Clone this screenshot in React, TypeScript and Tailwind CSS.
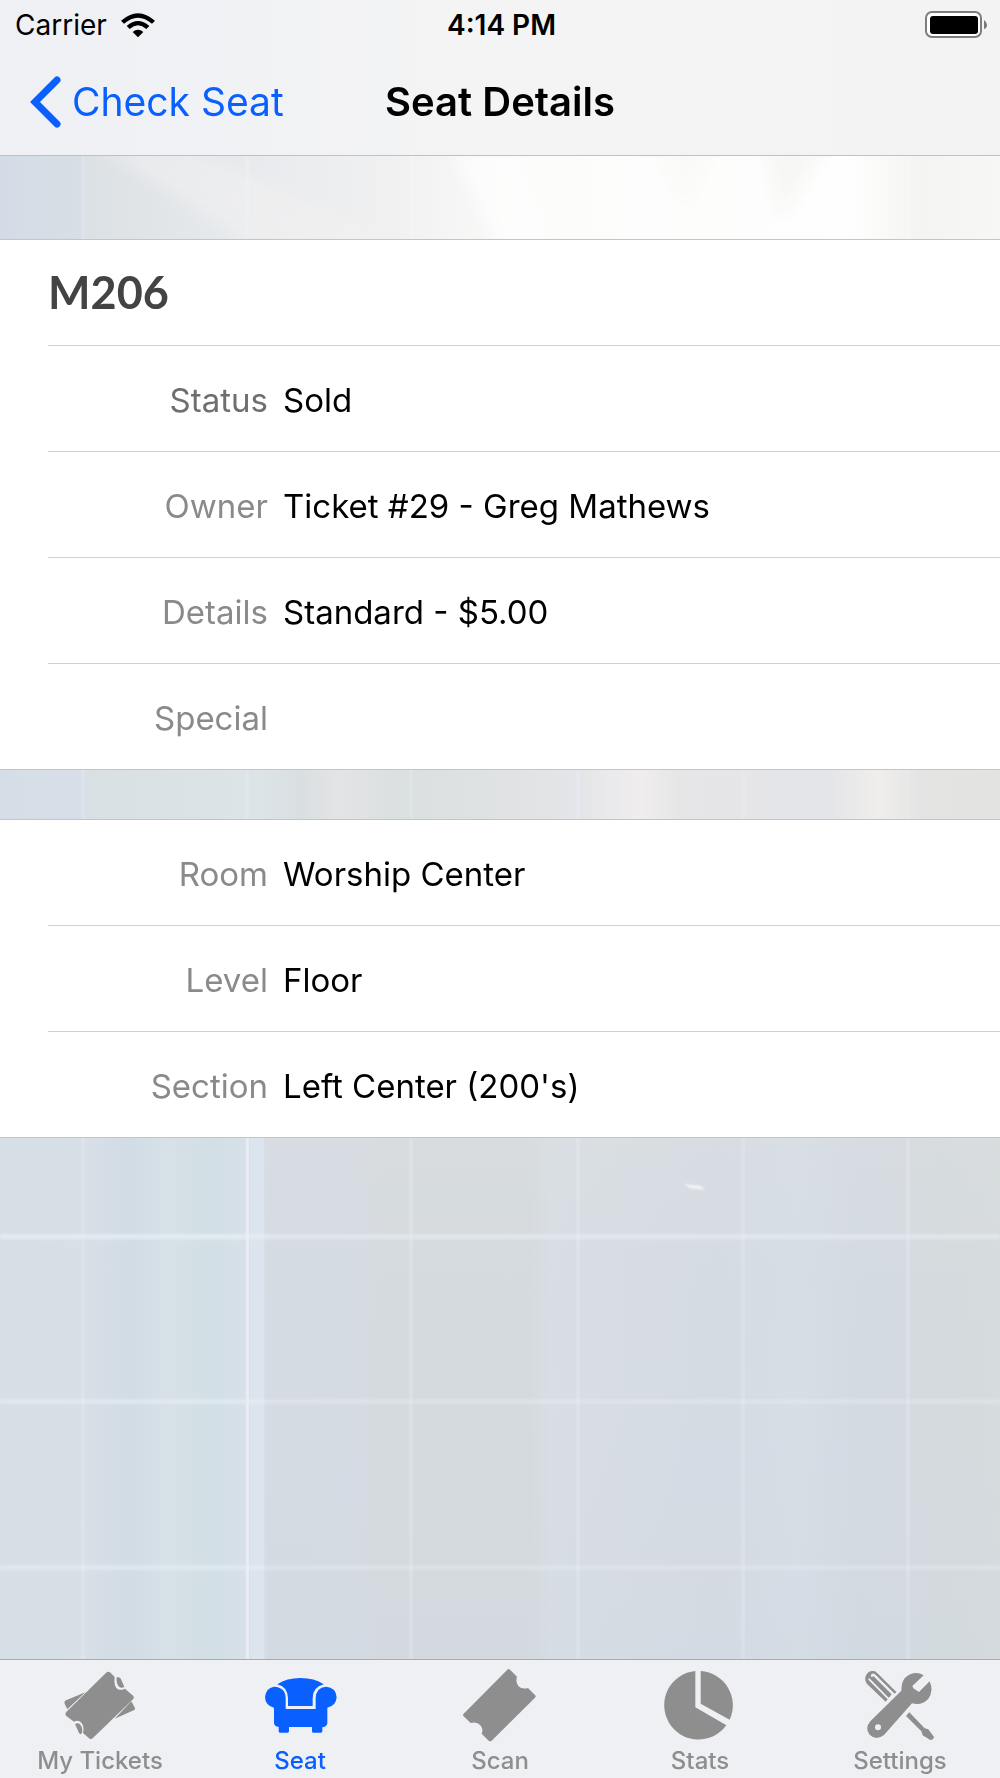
import type { ReactNode } from "react";
import clsx from "clsx";

type Row = { label: string; value: string; strong?: boolean };

const seatRows: Row[] = [
    { label: "Status", value: "Sold", strong: true },
    { label: "Owner", value: "Ticket #29 - Greg Mathews" },
    { label: "Details", value: "Standard - $5.00" },
    { label: "Special", value: "" },
];

const placeRows: Row[] = [
    { label: "Room", value: "Worship Center" },
    { label: "Level", value: "Floor" },
    { label: "Section", value: "Left Center (200's)" },
];

// Frosted glass wall behind the lists
function Wallpaper() {
    const columns = [83, 247, 411, 578, 743, 908];
    const lines = [1237, 1402, 1568];
    return (
        <svg
            className="absolute inset-0 -z-10 h-full w-full"
            viewBox="0 0 1000 1778"
            preserveAspectRatio="none"
            aria-hidden="true"
        >
            <defs>
                <linearGradient id="top" x1="0" x2="1" y1="0" y2="0">
                    <stop offset="0" stopColor="#d3dce6" />
                    <stop offset="0.08" stopColor="#d8dee5" />
                    <stop offset="0.09" stopColor="#dce1e5" />
                    <stop offset="0.24" stopColor="#e7eaed" />
                    <stop offset="0.4" stopColor="#f1f1f1" />
                    <stop offset="0.54" stopColor="#fcfcfb" />
                    <stop offset="0.85" stopColor="#fefefe" />
                    <stop offset="0.92" stopColor="#f4f4f2" />
                    <stop offset="1" stopColor="#f7f7f5" />
                </linearGradient>
                <linearGradient id="middle" x1="0" x2="1" y1="0" y2="0">
                    <stop offset="0" stopColor="#d5dee6" />
                    <stop offset="0.08" stopColor="#d8dee8" />
                    <stop offset="0.09" stopColor="#d9e0e4" />
                    <stop offset="0.26" stopColor="#dce4e8" />
                    <stop offset="0.3" stopColor="#d9dfe1" />
                    <stop offset="0.34" stopColor="#e3e4e5" />
                    <stop offset="0.4" stopColor="#dadfdf" />
                    <stop offset="0.58" stopColor="#e4e5e8" />
                    <stop offset="0.64" stopColor="#f0edee" />
                    <stop offset="0.68" stopColor="#e6e6e7" />
                    <stop offset="0.83" stopColor="#e4e5e9" />
                    <stop offset="0.88" stopColor="#f0eeeb" />
                    <stop offset="0.92" stopColor="#e3e4e3" />
                    <stop offset="1" stopColor="#e3e3e2" />
                </linearGradient>
                <linearGradient id="wall" x1="0" x2="1" y1="0" y2="0">
                    <stop offset="0" stopColor="#d5dfe5" />
                    <stop offset="0.08" stopColor="#d8dfe7" />
                    <stop offset="0.13" stopColor="#d2dce5" />
                    <stop offset="0.17" stopColor="#d7e1e7" />
                    <stop offset="0.21" stopColor="#d2dfe5" />
                    <stop offset="0.262" stopColor="#d8e1e9" />
                    <stop offset="0.268" stopColor="#d4dbe2" />
                    <stop offset="0.36" stopColor="#d5dbe3" />
                    <stop offset="0.38" stopColor="#d5dade" />
                    <stop offset="0.53" stopColor="#d5dade" />
                    <stop offset="0.55" stopColor="#d8dee4" />
                    <stop offset="0.72" stopColor="#d5dbe3" />
                    <stop offset="0.8" stopColor="#d6dee6" />
                    <stop offset="0.86" stopColor="#d3dae1" />
                    <stop offset="0.9" stopColor="#d5dae1" />
                    <stop offset="0.94" stopColor="#d4dadd" />
                    <stop offset="1" stopColor="#d6dbdd" />
                </linearGradient>
                <linearGradient id="shade" x1="0" x2="0" y1="0" y2="1">
                    <stop offset="0" stopColor="#e2e4e0" stopOpacity="0.5" />
                    <stop offset="0.5" stopColor="#d4dae2" stopOpacity="0" />
                    <stop offset="1" stopColor="#cbd5df" stopOpacity="0.4" />
                </linearGradient>
                <filter id="soft" x="-20%" y="-20%" width="140%" height="140%">
                    <feGaussianBlur stdDeviation="8" />
                </filter>
                <filter id="edge" x="-20%" y="-20%" width="140%" height="140%">
                    <feGaussianBlur stdDeviation="1" />
                </filter>
            </defs>
            <rect width="1000" height="500" fill="url(#top)" />
            <rect y="500" width="1000" height="500" fill="url(#middle)" />
            <rect y="1000" width="1000" height="778" fill="url(#wall)" />
            <rect x="266" y="1000" width="734" height="778" fill="url(#shade)" />
            <g filter="url(#soft)">
                <path d="M100 150 L190 150 L430 250 L260 250 Z" fill="#f4f1f2" opacity="0.5" />
                <path d="M450 150 L520 150 L550 250 L500 250 Z" fill="#fff" opacity="0.6" />
                <path d="M655 140 H715 L686 208 Z" fill="#f9f9f7" />
                <path d="M762 140 H830 L780 220 Z" fill="#f7f7f5" />
            </g>
            {columns.map((x) => (
                <g key={x}>
                    <rect x={x - 2} y="156" width="4" height="90" fill="#fff" opacity="0.15" />
                    <rect x={x - 2} y="760" width="4" height="1018" fill="#e9eff4" opacity="0.3" />
                </g>
            ))}
            <rect x="246" y="1130" width="3" height="648" fill="#ecf1f7" opacity="0.7" />
            <rect x="250" y="1130" width="14" height="648" fill="#e4ecf5" opacity="0.4" />
            <g filter="url(#edge)" fill="#e9f0f4">
                {lines.map((y) => (
                    <g key={y}>
                        <rect y={y - 3} width="1000" height="5" opacity="0.35" />
                        <rect y={y - 3} width="264" height="5" opacity="0.35" />
                    </g>
                ))}
                <rect y="1234" width="1000" height="6" opacity="0.3" />
                <path d="M683 1184 L700 1186 L706 1190 L690 1188 Z" fill="#f4f6f7" />
            </g>
        </svg>
    );
}

function WifiIcon() {
    return (
        <svg className="h-6 w-[34px]" viewBox="363 36 102 72" aria-hidden="true">
            <path d="M363 59 Q414 14 465 59 L456 68 Q414 32 372 68 Z" />
            <path d="M380 75 Q414 45 448 75 L439 84 Q414 62 389 84 Z" />
            <path d="M398 93 Q414 80 430 93 L414 109 Z" />
        </svg>
    );
}

function BatteryIcon() {
    return (
        <svg className="h-7 w-16" viewBox="0 0 64 28" role="img" aria-label="Battery full">
            <rect x="2" y="1" width="55" height="25" rx="6" fill="#fff" stroke="#7d7d7d" strokeWidth="2" />
            <rect x="6" y="5" width="48" height="18" rx="3" />
            <path d="M60 9 Q63 11 63 14 Q63 17 60 18 Z" fill="#777" />
        </svg>
    );
}

function TabIcon({ children }: { children: ReactNode }) {
    return (
        <svg className="h-[76px] w-20" viewBox="0 0 240 228" fill="currentColor" aria-hidden="true">
            {children}
        </svg>
    );
}

const tabs = [
    {
        name: "My Tickets",
        icon: (
            <TabIcon>
                <path d="M15 99 Q12 103 14 107 L22 124 L76 73 L18 97 Z" />
                <path d="M214 100 L225 120 Q226 125 221 127 L164 152 Z" />
                <path d="M140 13 Q145 9 150 13 L164 27 Q160 56 174 64 Q182 68 195 62 L220 84 Q224 89 219 94 L98 211 Q92 216 87 211 L69 195 Q74 176 64 164 Q56 155 42 161 L18 143 Q14 138 18 133 Z" />
                <path d="M170 28 Q181 26 183 34 L193 56 Q185 62 177 56 Q168 46 170 28 Z" />
                <path d="M45 168 Q54 163 61 170 Q69 180 66 195 Q61 202 57 195 Z" />
            </TabIcon>
        ),
    },
    {
        name: "Seat",
        icon: (
            <TabIcon>
                <path d="M52 49 Q80 30 121 30 Q164 30 191 49 Q158 58 158 90 V114 H84 V90 Q82 56 52 49 Z" />
                <path d="M42 56 Q77 58 77 91 V123 H167 V91 Q168 58 198 56 Q228 58 230 88 Q228 114 202 119 V166 Q200 177 187 178 V190 Q187 194 183 194 H159 Q156 194 156 190 V177 H87 V190 Q87 194 83 194 H60 Q56 194 56 190 V177 Q43 175 42 166 V119 Q16 113 15 88 Q17 60 42 56 Z" />
            </TabIcon>
        ),
    },
    {
        name: "Scan",
        icon: (
            <TabIcon>
                <path d="M142 5 Q146 1 150 5 L171 26 Q166 43 175 54 Q186 65 204 60 L225 81 Q229 86 225 89 L95 218 Q91 222 86 218 L65 197 Q71 184 61 172 Q51 160 32 165 L11 145 Q7 141 11 137 Z" />
            </TabIcon>
        ),
    },
    {
        name: "Stats",
        icon: (
            <TabIcon>
                <path d="M106 9 V118 L199 172 A103 103 0 1 1 106 9 Z" />
                <path d="M122 9 A103 103 0 0 1 209 155 L122 107 Z" />
            </TabIcon>
        ),
    },
    {
        name: "Settings",
        icon: (
            <TabIcon>
                <path d="M22 49 Q12 38 17 25 Q24 6 45 10 L54 17 L109 72 L104 77 L45 19 Q39 14 34 19 L32 24 L92 83 L86 89 L27 29 L25 35 L83 94 L77 101 Z" />
                <path d="M43 21 L96 75 L89 82 L36 28 Z" fill="#eff0f3" />
                <path d="M40 24 L95 79 L88 86 L33 31 Z" />
                <path d="M191 22 L157 54 L160 61 L177 72 L209 40 Q222 69 205 92 Q186 114 156 106 L72 201 Q48 219 29 200 Q13 182 31 160 L124 68 Q123 34 146 21 Q169 9 191 22 Z" />
                <circle cx="54" cy="178" r="9" fill="#eff0f3" />
                <path d="M148 133 L194 181 L205 184 L222 207 Q220 216 211 216 L188 202 L184 190 L138 144 Z" />
            </TabIcon>
        ),
    },
];

function DetailList({ rows }: { rows: Row[] }) {
    return (
        <dl>
            {rows.map((row, i) => (
                <div key={row.label} className={clsx("bg-white", i < rows.length - 1 && "pl-12")}>
                    <div
                        className={clsx(
                            "flex h-[106px] items-center gap-[15px] border-b pt-[2px] text-[33px] leading-10",
                            i < rows.length - 1 ? "border-[#cfcfd1]" : "border-[#c4c5ca] pl-12"
                        )}
                    >
                        <dt className={clsx("w-[220px] shrink-0 text-right", row.strong ? "text-[#6f6f6f]" : "text-[#8a8a8a]")}>
                            {row.label}
                        </dt>
                        <dd className="min-w-0 flex-1 text-black">{row.value}</dd>
                    </div>
                </div>
            ))}
        </dl>
    );
}

export default function App() {
    return (
        <div className="relative isolate flex min-h-screen flex-col font-['Inter',sans-serif] text-black">
            <Wallpaper />

            <header className="border-b border-[#bfc0c4] bg-linear-to-r from-[#eef0f4] via-[#f4f4f4] to-[#f3f3f3]">
                <div className="grid h-[50px] grid-cols-[1fr_auto_1fr] items-center pr-3 pl-[15px] text-[28px] leading-8">
                    <div className="flex items-center gap-[14px]">
                        <span>Carrier</span>
                        <WifiIcon />
                    </div>
                    <span className="font-semibold">4:14 PM</span>
                    <div className="flex justify-end">
                        <BatteryIcon />
                    </div>
                </div>
                <div className="grid h-[105px] grid-cols-[1fr_auto_1fr] items-center px-[30px] pb-[2px] text-[39px] leading-12">
                    <button type="button" className="flex items-center gap-[11px] text-[#0a60ff]">
                        <svg className="h-[52px] w-[31px]" viewBox="0 0 31 52" fill="none" aria-hidden="true">
                            <path d="M27 4 L5 26 L27 48" stroke="currentColor" strokeWidth="7" strokeLinecap="round" />
                        </svg>
                        Check Seat
                    </button>
                    <h1 className="text-[40px] font-semibold">Seat Details</h1>
                </div>
            </header>

            <main className="flex-1 pt-[83px]">
                <section className="border-t border-[#c4c5ca]">
                    <div className="bg-white pl-12">
                        <h2 className="flex h-[106px] items-center border-b border-[#cfcfd1] font-['Lato',sans-serif] text-[45px] font-bold text-[#434343]">
                            M206
                        </h2>
                    </div>
                    <DetailList rows={seatRows} />
                </section>
                <section className="mt-[49px] border-t border-[#c4c5ca]">
                    <DetailList rows={placeRows} />
                </section>
            </main>

            <nav className="flex border-t border-[#a6acb3] bg-[#eff0f4] pt-2">
                {tabs.map((tab) => (
                    <button
                        key={tab.name}
                        type="button"
                        aria-current={tab.name === "Seat" ? "page" : undefined}
                        className={clsx(
                            "flex flex-1 basis-0 flex-col items-center text-[24px] leading-[34px] font-medium",
                            tab.name === "Seat" ? "text-[#0a60ff]" : "text-[#8e8e8e]"
                        )}
                    >
                        {tab.icon}
                        {tab.name}
                    </button>
                ))}
            </nav>
        </div>
    );
}
